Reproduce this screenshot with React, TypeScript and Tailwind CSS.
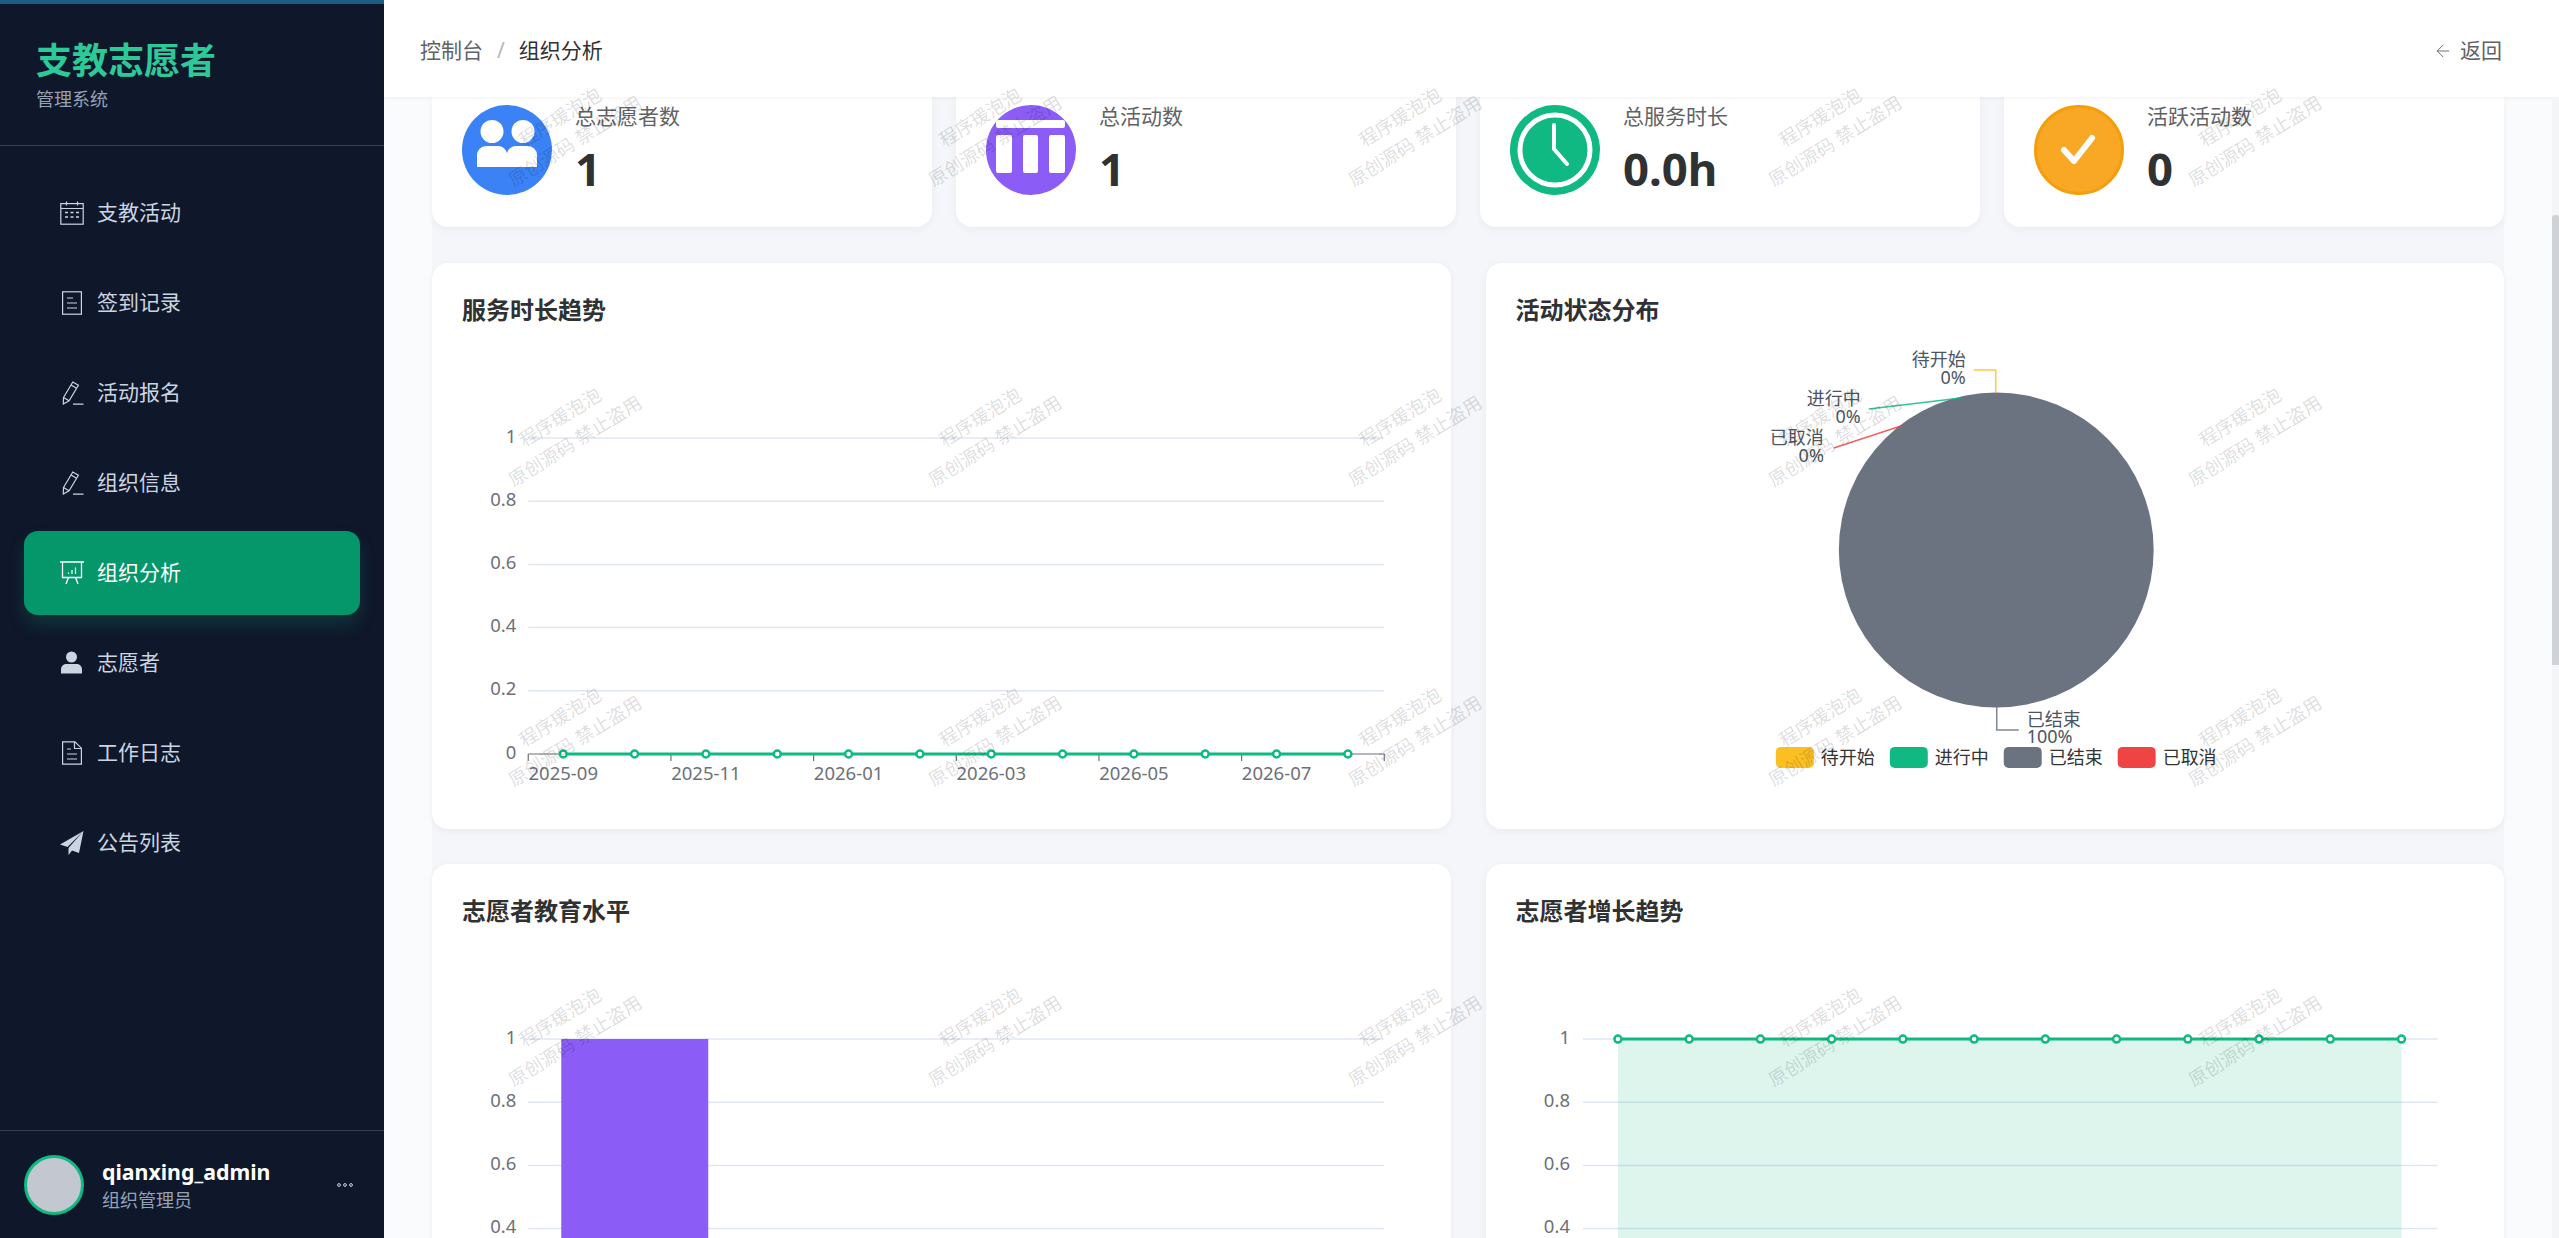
import { ArrowLeft } from "lucide-react";
import type { ReactNode } from "react";

const CalendarIcon = () => (
  <svg viewBox="0 0 24 24" className="h-6 w-6" fill="none" stroke="currentColor" strokeWidth="1.2">
    <rect x="0.8" y="2.6" width="22.4" height="20.6" />
    <path d="M1 7.5h22M6.5 0.5v4M17.5 0.5v4" />
    <path d="M5 11.5h3M10.5 11.5h3M16 11.5h3M5 16h3M10.5 16h3M16 16h3" strokeWidth="1.6" />
  </svg>
);

const TicketIcon = () => (
  <svg viewBox="0 0 24 24" className="h-6 w-6" fill="none" stroke="currentColor" strokeWidth="1.2">
    <rect x="2.6" y="0.8" width="18.8" height="22.4" />
    <path d="M7 7h6M7 12h10M7 17h10" />
  </svg>
);

const EditIcon = () => (
  <svg viewBox="0 0 24 24" className="h-6 w-6" fill="none" stroke="currentColor" strokeWidth="1.2">
    <path d="M3.5 16.5 12.8 1l5.6 3.2-9.3 15.6-5.8 3.2z" />
    <path d="M11 4l5.6 3.3M3.5 16.5l5.6 3.3M13 23.2h10.5" />
  </svg>
);

const BoardIcon = () => (
  <svg viewBox="0 0 24 24" className="h-6 w-6" fill="none" stroke="currentColor" strokeWidth="1.3">
    <path d="M0 1h24M2.5 1v15.5h19V1M8.5 16.5 6 23M15.5 16.5 18 23" />
    <path d="M8.5 11.5v1.5M12 9v4M15.5 6.5V13" strokeWidth="1.2" />
  </svg>
);

const UserIcon = () => (
  <svg viewBox="0 0 24 24" className="h-6 w-6" fill="currentColor">
    <circle cx="11.5" cy="6" r="5.5" />
    <path d="M1 22.5v-4c0-3.5 2.5-5.5 6-5.5h9c3.5 0 6 2 6 5.5v4z" />
  </svg>
);

const DocIcon = () => (
  <svg viewBox="0 0 24 24" className="h-6 w-6" fill="none" stroke="currentColor" strokeWidth="1.2">
    <path d="M2.6.8h12.4l6.4 6.4v16H2.6z" />
    <path d="M14.5 1v6.5h6.5M7 8h4M7 13h10M7 18h10" />
  </svg>
);

const PlaneIcon = () => (
  <svg viewBox="0 0 24 24" className="h-6 w-6" fill="currentColor">
    <path d="M23.5 0 0 13.5l7.5 2.5L23.5 0zM23.5 0 8.5 17v7l3.5-4.5 7 2.5z" />
  </svg>
);

const menu = [
  { label: "支教活动", icon: <CalendarIcon /> },
  { label: "签到记录", icon: <TicketIcon /> },
  { label: "活动报名", icon: <EditIcon /> },
  { label: "组织信息", icon: <EditIcon /> },
  { label: "组织分析", icon: <BoardIcon />, active: true },
  { label: "志愿者", icon: <UserIcon /> },
  { label: "工作日志", icon: <DocIcon /> },
  { label: "公告列表", icon: <PlaneIcon /> },
];

function Sidebar() {
  return (
    <aside className="z-30 flex h-full w-[384px] shrink-0 flex-col border-t-[4px] border-[#1f5a84] bg-[#0f172a]">
      <div className="h-[142px] shrink-0 border-b border-[#334155] pl-[36px] pt-[30px]">
        <h1 className="text-[36px] font-bold leading-[53px] text-[#2cc999]">支教志愿者</h1>
        <p className="text-[18px] leading-[24px] text-[#94a3b8]">管理系统</p>
      </div>
      <nav className="flex flex-1 flex-col gap-[6px] px-[24px] pt-[25px]">
        {menu.map((item) => (
          <a
            key={item.label}
            className={`flex h-[84px] items-center gap-[13px] rounded-[14px] pl-[36px] text-[21px] ${
              item.active
                ? "bg-[#059669] text-white shadow-[0_10px_18px_rgba(16,185,129,0.18)]"
                : "text-[#cbd5e1]"
            }`}
          >
            {item.icon}
            {item.label}
          </a>
        ))}
      </nav>
      <div className="flex h-[108px] shrink-0 items-center border-t border-[#334155] px-[24px]">
        <div className="h-[60px] w-[60px] rounded-full border-[3px] border-[#10b981] bg-[#c3c7d0]" />
        <div className="ml-[18px] flex-1">
          <div className="text-[21.3px] font-bold leading-[30px] text-white">qianxing_admin</div>
          <div className="text-[18px] leading-[26px] text-[#94a3b8]">组织管理员</div>
        </div>
        <svg viewBox="0 0 16 4" className="mr-[7px] h-1 w-4" fill="none" stroke="#cbd5e1" strokeWidth="1">
          <circle cx="2" cy="2" r="1.4" />
          <circle cx="8" cy="2" r="1.4" />
          <circle cx="14" cy="2" r="1.4" />
        </svg>
      </div>
    </aside>
  );
}

const UsersGlyph = () => (
  <svg viewBox="0 0 90 90" className="h-[90px] w-[90px]">
    <circle cx="45" cy="45" r="45" fill="#3b82f6" />
    <circle cx="30" cy="26.5" r="11.5" fill="#fff" />
    <circle cx="61" cy="26.5" r="11.5" fill="#fff" />
    <path d="M15 62V50a9 9 0 0 1 9-9h12a9 9 0 0 1 9 7 9 9 0 0 1 9-7h12a9 9 0 0 1 9 9v12z" fill="#fff" />
  </svg>
);

const BarsGlyph = () => (
  <svg viewBox="0 0 90 90" className="h-[90px] w-[90px]" fill="#fff">
    <circle cx="45" cy="45" r="45" fill="#8b5cf6" />
    <rect x="10" y="15" width="69" height="8" rx="2" />
    <rect x="10" y="30" width="16" height="38" rx="2" />
    <rect x="37" y="30" width="15" height="38" rx="2" />
    <rect x="63" y="30" width="16" height="38" rx="2" />
  </svg>
);

const ClockGlyph = () => (
  <svg viewBox="0 0 90 90" className="h-[90px] w-[90px]" fill="none" stroke="#fff">
    <circle cx="45" cy="45" r="45" fill="#10b981" stroke="none" />
    <circle cx="45" cy="45" r="35" strokeWidth="5" />
    <path d="M44 20v24l13 15" strokeWidth="4" strokeLinecap="round" strokeLinejoin="round" />
  </svg>
);

const CheckGlyph = () => (
  <svg viewBox="0 0 90 90" className="h-[90px] w-[90px]" fill="none">
    <circle cx="45" cy="45" r="43.5" fill="#f9a825" stroke="#f59e0b" strokeWidth="3" />
    <path d="M30 45l10 11 18-23" stroke="#fff" strokeWidth="6" strokeLinecap="round" strokeLinejoin="round" />
  </svg>
);

const stats = [
  { label: "总志愿者数", value: "1", icon: <UsersGlyph /> },
  { label: "总活动数", value: "1", icon: <BarsGlyph /> },
  { label: "总服务时长", value: "0.0h", icon: <ClockGlyph /> },
  { label: "活跃活动数", value: "0", icon: <CheckGlyph /> },
];

const GREEN = "#10b981";
const axisText = { fontSize: 18.5, fill: "#6e7079" };
const yLabels = ["1", "0.8", "0.6", "0.4", "0.2", "0"];

// y 轴网格，y0 为刻度 1 的位置，步长约 63.2
function Grid({ x0, x1, textX, y0 }: { x0: number; x1: number; textX: number; y0: number }) {
  return (
    <>
      {yLabels.map((t, i) => {
        const y = y0 + i * 63.2;
        return (
          <g key={t}>
            {i < 5 && <line x1={x0} x2={x1} y1={y} y2={y} stroke="#e0e6f1" strokeWidth="1.5" />}
            <text x={textX} y={y + 4.5} textAnchor="end" {...axisText}>
              {t}
            </text>
          </g>
        );
      })}
    </>
  );
}

function Points({ x0, y, step }: { x0: number; y: number; step: number }) {
  const xs = Array.from({ length: 12 }, (_, i) => x0 + i * step);
  return (
    <>
      <line x1={xs[0]} x2={xs[11]} y1={y} y2={y} stroke={GREEN} strokeWidth="3" />
      {xs.map((x) => (
        <circle key={x} cx={x} cy={y} r="3.5" fill="#fff" stroke={GREEN} strokeWidth="2.5" />
      ))}
    </>
  );
}

function TrendChart() {
  const ticks = [0, 1, 2, 3, 4, 5, 6].map((i) => 528 + i * 142.67);
  const months = ["2025-09", "2025-11", "2026-01", "2026-03", "2026-05", "2026-07"];
  return (
    <svg viewBox="462 349 958 450" className="block h-[450px] w-full">
      <Grid x0={528} x1={1384} textX={516} y0={438} />
      <line x1={528} x2={1384} y1={754} y2={754} stroke="#6e7079" strokeWidth="1.2" />
      {ticks.map((x) => (
        <line key={x} x1={x} x2={x} y1={754} y2={761} stroke="#6e7079" strokeWidth="1.2" />
      ))}
      {months.map((m, i) => (
        <text key={m} x={563 + i * 142.67} y={780} textAnchor="middle" {...axisText}>
          {m}
        </text>
      ))}
      <Points x0={563} y={754} step={71.33} />
    </svg>
  );
}

const pieLabels = [
  { name: "待开始", pct: "0%", x: 1965, y: 366, anchor: "end", line: "M1973 370H1995V393", color: "#fbbf24" },
  { name: "进行中", pct: "0%", x: 1860, y: 405, anchor: "end", line: "M1868 409L1960 398", color: "#10b981" },
  { name: "已取消", pct: "0%", x: 1823, y: 444, anchor: "end", line: "M1833 448L1900 426", color: "#ef4444" },
  { name: "已结束", pct: "100%", x: 2026, y: 726, anchor: "start", line: "M1996 707V730H2018", color: "#6b7280" },
];

const legend = [
  { name: "待开始", color: "#fbbf24" },
  { name: "进行中", color: "#10b981" },
  { name: "已结束", color: "#6b7280" },
  { name: "已取消", color: "#ef4444" },
];

function PieChart() {
  return (
    <svg viewBox="1515 349 959 450" className="block h-[450px] w-full">
      <circle cx="1995.5" cy="550" r="157.5" fill="#6b7280" />
      {pieLabels.map((p) => (
        <g key={p.name}>
          <path d={p.line} fill="none" stroke={p.color} strokeWidth="1.5" opacity="0.85" />
          <text x={p.x} y={p.y} textAnchor={p.anchor as "end" | "start"} fontSize="18" fill="#4b5563">
            {p.name}
          </text>
          <text x={p.x} y={p.y + 17.5} textAnchor={p.anchor as "end" | "start"} fontSize="18" fill="#4b5563">
            {p.pct}
          </text>
        </g>
      ))}
      {legend.map((l, i) => (
        <g key={l.name}>
          <rect x={1775 + i * 114} y={747} width="38" height="21" rx="5" fill={l.color} />
          <text x={1820 + i * 114} y={764} fontSize="18" fill="#333">
            {l.name}
          </text>
        </g>
      ))}
    </svg>
  );
}

function EducationChart() {
  return (
    <svg viewBox="462 950 958 450" className="block h-[450px] w-full">
      <Grid x0={528} x1={1384} textX={516} y0={1039} />
      <rect x={561} y={1039} width={147} height={320} fill="#8b5cf6" />
    </svg>
  );
}

function GrowthChart() {
  return (
    <svg viewBox="1515 950 959 450" className="block h-[450px] w-full">
      <Grid x0={1582} x1={2437} textX={1569} y0={1039} />
      <rect x={1617} y={1039} width={784} height={320} fill="#10b981" opacity="0.14" />
      <Points x0={1617} y={1039} step={71.27} />
    </svg>
  );
}

function ChartCard({ title, children }: { title: string; children: ReactNode }) {
  return (
    <section className="h-[566px] rounded-[16px] bg-white p-[30px] shadow-[0_2px_8px_rgba(0,0,0,0.05)]">
      <h3 className="mb-[22px] text-[24px] font-bold leading-[34px] text-[#303133]">{title}</h3>
      {children}
    </section>
  );
}

function Watermarks() {
  const cells = Array.from({ length: 20 }, (_, i) => i);
  return (
    <div className="pointer-events-none absolute inset-0 z-20 overflow-hidden">
      <div className="-ml-[27px] -mt-[21px] grid grid-cols-[repeat(5,420px)] auto-rows-[300px]">
        {cells.map((i) => (
          <div key={i} className="flex items-center justify-center">
            <div className="-rotate-[32deg] whitespace-nowrap text-center text-[18.5px] leading-[28px] text-black/15">
              <div>程序瑗泡泡</div>
              <div>原创源码 禁止盗用</div>
            </div>
          </div>
        ))}
      </div>
    </div>
  );
}

export default function App() {
  return (
    <div className="flex h-[1238px] w-full overflow-hidden bg-[#fafbfc] font-['Noto_Sans','Noto_Sans_CJK_SC',sans-serif]">
      <Sidebar />
      <div className="relative flex min-w-0 flex-1 flex-col">
        <header className="relative z-10 flex h-[97px] shrink-0 items-center justify-between bg-white pl-[36px] pr-[57px] pt-[4px] shadow-[0_1px_4px_rgba(0,0,0,0.06)]">
          <div className="flex items-center text-[21px]">
            <span className="text-[#606266]">控制台</span>
            <span className="mx-[14px] text-[#b4b8bf]">/</span>
            <span className="text-[#303133]">组织分析</span>
          </div>
          <div className="flex items-center gap-[7px] text-[21px] text-[#606266]">
            <ArrowLeft className="h-[20px] w-[20px]" strokeWidth={1.1} />
            返回
          </div>
        </header>
        <main className="min-h-0 flex-1 overflow-hidden pl-[48px] pr-[55px]">
          <div className="-mt-[24px] bg-[#f4f6fa]">
            <div className="grid grid-cols-4 gap-[24px]">
              {stats.map((s) => (
                <div
                  key={s.label}
                  className="flex h-[154px] items-center gap-[23px] rounded-[16px] bg-white pl-[30px] shadow-[0_2px_8px_rgba(0,0,0,0.05)]"
                >
                  {s.icon}
                  <div>
                    <div className="text-[21px] leading-[30px] text-[#606266]">{s.label}</div>
                    <div className="mt-[6px] text-[45.5px] font-bold leading-[62px] text-[#303133]">{s.value}</div>
                  </div>
                </div>
              ))}
            </div>
            <div className="mt-[36px] grid grid-cols-2 gap-x-[35px] gap-y-[35px]">
              <ChartCard title="服务时长趋势">
                <TrendChart />
              </ChartCard>
              <ChartCard title="活动状态分布">
                <PieChart />
              </ChartCard>
              <ChartCard title="志愿者教育水平">
                <EducationChart />
              </ChartCard>
              <ChartCard title="志愿者增长趋势">
                <GrowthChart />
              </ChartCard>
            </div>
          </div>
        </main>
        <div className="absolute bottom-0 right-0 top-[97px] z-10 w-[7px] bg-[#f4f5f6]">
          <div className="mt-[118px] h-[450px] rounded-t-[3px] bg-[#cfd3d7]" />
        </div>
        <Watermarks />
      </div>
    </div>
  );
}
